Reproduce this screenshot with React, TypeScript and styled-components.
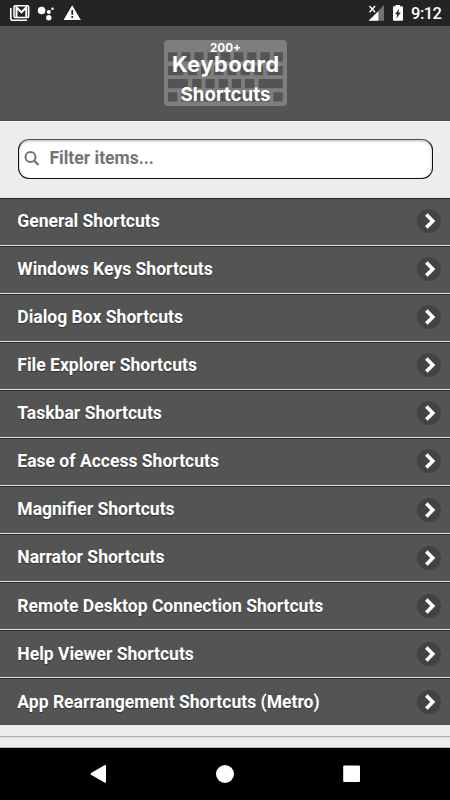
import React from 'react';
import styled, { createGlobalStyle } from 'styled-components';

const GlobalStyle = createGlobalStyle`
  * { box-sizing: border-box; }
  body { margin: 0; background: #ededed; font-family: Roboto, "Liberation Sans", sans-serif; }
`;

const Screen = styled.div`
  width: 450px;
  height: 800px;
  display: flex;
  flex-direction: column;
  overflow: hidden;
  background: #ededed;
`;

const StatusBar = styled.div`
  height: 26px;
  flex: none;
  display: flex;
  justify-content: space-between;
  background: #242424;
`;

const Clock = styled.span`
  color: #fff;
  font-size: 16.5px;
  line-height: 28px;
  width: 39px;
  margin-left: -1px;
  font-weight: 500;
  letter-spacing: -0.5px;
`;

const StatusGroup = styled.div`
  display: flex;
`;

const Header = styled.header`
  height: 95px;
  flex: none;
  display: flex;
  justify-content: center;
  padding: 14px 0 0 1px;
  background: #545454;
  border-bottom: 1px solid #505050;
`;

const SearchArea = styled.div`
  height: 76.5px;
  flex: none;
  padding: 16.5px 17px 0 17.5px;
  border-top: 1px solid #fafafa;
`;

const SearchBox = styled.label`
  height: 40.5px;
  display: flex;
  align-items: center;
  padding-left: 5px;
  gap: 10px;
  background: #fff;
  border: 1px solid #111;
  border-top-color: #555;
  border-radius: 11px;
  box-shadow: inset 0 1px 3px rgba(0, 0, 0, 0.28);
`;

const SearchInput = styled.input`
  border: 0;
  outline: 0;
  padding: 0;
  flex: 1;
  background: transparent;
  font: 700 17.5px Roboto, sans-serif;
  margin-top: -1px;
  &::placeholder { color: #747474; opacity: 1; }
`;

const List = styled.ul`
  list-style: none;
  margin: 0;
  padding: 0;
  flex: none;
`;

const Row = styled.li`
  height: 48.08px;
  display: flex;
  align-items: center;
  justify-content: space-between;
  padding: 0 9px 0 17.3px;
  background: #545454;
  border-top: 1px solid #262626;
  border-bottom: 1px solid #e4e4e4;
  color: #fff;
  font-size: 17.55px;
  font-weight: 700;
  text-shadow: 0 1px 1px #333;
`;

const Label = styled.span`
  line-height: 22px;
  margin-top: -1.2px;
`;

const Arrow = styled.span`
  width: 24px;
  height: 24px;
  margin-top: -1px;
  display: flex;
  border-radius: 50%;
  background: #434343;
`;

const Footer = styled.footer`
  flex: 1;
  padding-top: 9.5px;
  border-bottom: 1px solid #b5b5b5;
`;

const Rule = styled.div`
  height: 2px;
  border-top: 1px solid #b1b1b1;
  border-bottom: 1px solid #dcdcdc;
`;

const NavBar = styled.nav`
  height: 52px;
  flex: none;
  background: #000;
`;

const LogoText = styled.text`
  font-family: Inter, Lato, sans-serif;
  font-feature-settings: "cv11" 1;
  fill: #fff;
`;

const items = [
  'General Shortcuts', 'Windows Keys Shortcuts', 'Dialog Box Shortcuts', 'File Explorer Shortcuts',
  'Taskbar Shortcuts', 'Ease of Access Shortcuts', 'Magnifier Shortcuts', 'Narrator Shortcuts',
  'Remote Desktop Connection Shortcuts', 'Help Viewer Shortcuts', 'App Rearrangement Shortcuts (Metro)',
];

const squareKeys = (start: number, count: number) =>
  Array.from({ length: count }, (_, i) => ({ x: start + i * 13.2, w: 9.3 }));

const keyRows = [
  { y: 12.3, keys: squareKeys(4, 9) },
  { y: 26, keys: [{ x: 4, w: 15.5 }, ...squareKeys(23.8, 6), { x: 103.2, w: 15.5 }] },
  { y: 39, keys: [{ x: 4, w: 20 }, ...squareKeys(28.2, 5), { x: 94.5, w: 24.2 }] },
  { y: 52.3, keys: [{ x: 4, w: 9.3 }, { x: 17.2, w: 88.3 }, { x: 109.4, w: 9.3 }] },
];

function Logo() {
  return (
    <svg width="123" height="66" viewBox="0 0 123 66">
      <rect width="123" height="66" rx="4" fill="#7e7e7e" />
      {keyRows.map(r => r.keys.map(k => (
        <rect key={`${r.y}-${k.x}`} x={k.x} y={r.y} width={k.w} height="9.2" fill="#545454" />
      )))}
      <LogoText x="46" y="12.2" fontSize="12.3" fontWeight="700" textLength="31" lengthAdjust="spacingAndGlyphs">200+</LogoText>
      <LogoText x="8" y="31.9" fontSize="21.5" fontWeight="700" textLength="107" lengthAdjust="spacing">Keyboard</LogoText>
      <LogoText x="16.5" y="61.2" fontSize="19" fontWeight="700" textLength="90" lengthAdjust="spacingAndGlyphs">Shortcuts</LogoText>
    </svg>
  );
}

export default function App() {
  return (
    <>
      <GlobalStyle />
      <Screen>
        <StatusBar>
          <svg width="90" height="26" viewBox="0 0 90 26" fill="#fff">
            <path d="M10.800 8v10.500q0 1.700 1.700 1.700H27" fill="none" stroke="#fff" strokeWidth="1.600" />
            <rect x="14" y="5.800" width="14.700" height="11.800" rx="1.300" fill="none" stroke="#fff" strokeWidth="1.500" />
            <path d="M16.500 17.500V7.500l4.900 4.800L26.300 7.500v10" fill="none" stroke="#fff" strokeWidth="2" />
            <circle cx="41.600" cy="10.500" r="3.800" />
            <circle cx="48.800" cy="12" r="2" />
            <circle cx="52.500" cy="8.800" r="1.300" />
            <circle cx="48.800" cy="17.700" r="2.700" />
            <path d="M72.200 5.200L80.800 20H63.600Z" />
            <path d="M71.400 10h1.700v4.700h-1.700zM71.400 16h1.700v1.900h-1.700z" fill="#242424" />
          </svg>
          <StatusGroup>
            <svg width="44" height="26" viewBox="368 0 44 26">
              <path d="M384 5V20.800H378.500V10.500Z" fill="#717171" />
              <path d="M368.500 20.800L378.500 11V20.800Z" fill="#fff" />
              <path d="M369.500 6l5.600 6.200M375.100 6L369.500 12.200" stroke="#fff" strokeWidth="1.400" />
              <path d="M395.500 5h4.500v1.200h2q1 0 1 1V20q0 .8-1 .8h-8q-1 0-1-.8V7.200q0-1 1-1h1.500Z" fill="#fff" />
              <path d="M399.300 8.500L395 14.200h2.300l-1 4.300 4.500-6h-2.500Z" fill="#242424" />
            </svg>
            <Clock>9:12</Clock>
          </StatusGroup>
        </StatusBar>
        <Header><Logo /></Header>
        <SearchArea>
          <SearchBox>
            <svg width="16" height="16" viewBox="0 0 16 16" fill="none" stroke="#747474">
              <circle cx="6.500" cy="6" r="5" strokeWidth="2" />
              <path d="M10 9.500l4.500 4.500" strokeWidth="2.400" />
            </svg>
            <SearchInput placeholder="Filter items..." />
          </SearchBox>
        </SearchArea>
        <List>
          {items.map(item => (
            <Row key={item}>
              <Label>{item}</Label>
              <Arrow>
                <svg width="24" height="24" viewBox="0 0 24 24" fill="none" stroke="#fff" strokeWidth="3.600">
                  <path d="M9.300 5.500L15.800 12l-6.500 6.500" />
                </svg>
              </Arrow>
            </Row>
          ))}
        </List>
        <Footer><Rule /></Footer>
        <NavBar>
          <svg width="450" height="52" viewBox="0 0 450 52" fill="#fff">
            <path d="M91 25q-1 .9 0 1.800l13.500 7.800q1.500.7 1.500-.8V18q0-1.500-1.500-.8Z" />
            <circle cx="225" cy="26" r="9" />
            <rect x="343.200" y="17.500" width="16.800" height="16.500" rx="1" />
          </svg>
        </NavBar>
      </Screen>
    </>
  );
}
